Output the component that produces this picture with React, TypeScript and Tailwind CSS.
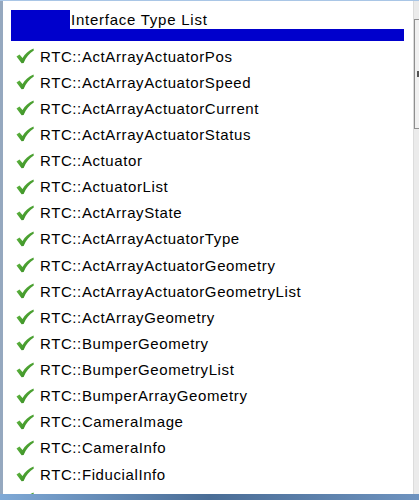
import React from "react";

const items = [
  "RTC::ActArrayActuatorPos",
  "RTC::ActArrayActuatorSpeed",
  "RTC::ActArrayActuatorCurrent",
  "RTC::ActArrayActuatorStatus",
  "RTC::Actuator",
  "RTC::ActuatorList",
  "RTC::ActArrayState",
  "RTC::ActArrayActuatorType",
  "RTC::ActArrayActuatorGeometry",
  "RTC::ActArrayActuatorGeometryList",
  "RTC::ActArrayGeometry",
  "RTC::BumperGeometry",
  "RTC::BumperGeometryList",
  "RTC::BumperArrayGeometry",
  "RTC::CameraImage",
  "RTC::CameraInfo",
  "RTC::FiducialInfo",
];

function Check() {
  return (
    <svg width="18" height="16" viewBox="0 0 18 16" className="shrink-0">
      <defs>
        <linearGradient id="g" x1="0" y1="0" x2="1" y2="1">
          <stop offset="0" stopColor="#6cc24a" />
          <stop offset="1" stopColor="#2a7f18" />
        </linearGradient>
      </defs>
      <path
        d="M0.5 8.5 L3.5 6.5 L6.5 10 C9 6 12.5 2.5 17.5 0.5 L17.8 2.5 C13.5 5 10.2 9 7.6 15 L5.6 15.3 Z"
        fill="url(#g)"
      />
    </svg>
  );
}

export default function App() {
  return (
    <div
      className="relative w-[419px] h-[500px] overflow-hidden bg-white flex flex-col"
      style={{ fontFamily: '"Liberation Sans", Arial, sans-serif' }}
    >
      <div className="h-[1px] bg-[#a9c6e6] shrink-0" />
      <div className="flex flex-1 min-h-0">
        <div className="w-[3px] bg-[#95a8bf] shrink-0" />
        <div className="flex-1 min-w-0 flex flex-col overflow-hidden">
          <div className="flex pl-[8px] pt-[9px] w-[401px]">
            <div className="w-[59px] h-[31px] bg-[#0000cc] shrink-0" />
            <div className="flex-1 flex flex-col">
              <div className="h-[19px] flex items-center text-[15px] tracking-[0.75px] text-black leading-none pl-[1px]">
                Interface Type List
              </div>
              <div className="h-[12px] bg-[#0000cc]" />
            </div>
          </div>
          <div className="flex flex-col pt-[2px]">
            {items.map((t) => (
              <div key={t} className="h-[26.125px] flex items-center shrink-0">
                <div className="pl-[13px] pr-[6px] flex items-center">
                  <Check />
                </div>
                <span className="text-[15px] tracking-[0.6px] text-black leading-none">{t}</span>
              </div>
            ))}
            <div className="h-[26px] flex items-start shrink-0 pl-[13px] pt-[5px]">
              <Check />
            </div>
          </div>
        </div>
        <div className="w-[6px] shrink-0 bg-[#ebebeb] border-l border-[#dcdcdc] flex flex-col">
          <div className="h-[18px]" />
          <div className="h-[110px] border border-r-0 border-[#8f8f8f] bg-[#f0f0f0] flex items-center justify-end">
            <div className="w-[2px] h-[6px] bg-[#555]" />
          </div>
        </div>
      </div>
      <div className="h-[6px] shrink-0 bg-gradient-to-r from-[#7fa9d6] via-[#4a6d96] to-[#6e93bf]" />
    </div>
  );
}
